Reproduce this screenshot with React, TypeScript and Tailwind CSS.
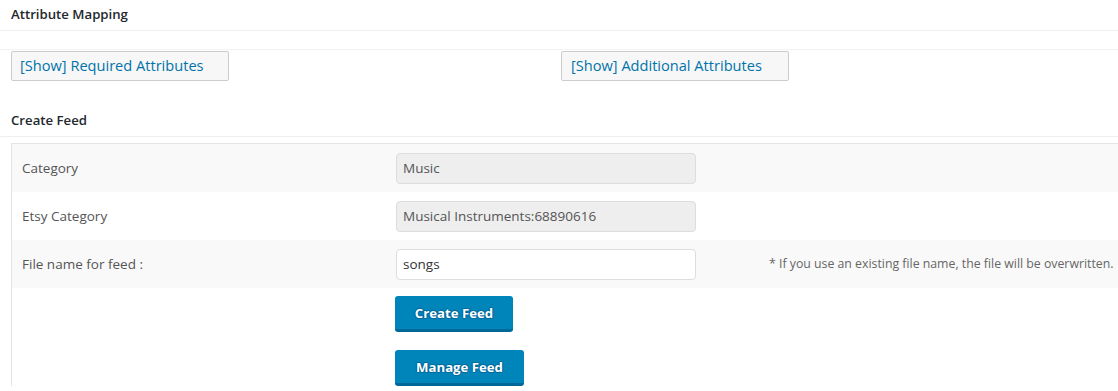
import React from "react";

const rows = [
  { label: "Category", value: "Music", disabled: true },
  { label: "Etsy Category", value: "Musical Instruments:68890616", disabled: true },
  { label: "File name for feed :", value: "songs", disabled: false },
];

const App: React.FC = () => {
  return (
    <div className="w-[1118px] h-[391px] overflow-hidden bg-white text-[13px] text-[#444] font-['Open_Sans',sans-serif]">
      {/* attribute mapping */}
      <div className="h-[31px] flex items-center px-[11px] border-b border-[#eeeeee] font-semibold text-[13.2px] text-[#23282d]">
        Attribute Mapping
      </div>
      <div className="h-[19px] border-b border-[#f3f3f3]"></div>
      <div className="flex pl-[11px] pt-px">
        <button className="w-[218px] h-[30px] text-left pl-[8px] bg-[#f7f7f7] border border-[#cccccc] rounded-[2px] text-[#0073aa] text-[14.6px]">
          [Show] Required Attributes
        </button>
        <button className="ml-[332px] w-[228px] h-[30px] text-left pl-[9px] bg-[#f7f7f7] border border-[#cccccc] rounded-[2px] text-[#0073aa] text-[14.6px]">
          [Show] Additional Attributes
        </button>
      </div>

      {/* create feed */}
      <div className="mt-[25px] h-[31px] flex items-center px-[11px] border-b border-[#eeeeee] font-semibold text-[13.2px] text-[#23282d]">
        Create Feed
      </div>
      <div className="mt-[6px] ml-[11px] border-t border-l border-[#e5e5e5]">
        {rows.map((r, i) => (
          <div
            key={r.label}
            className={
              "h-[48px] flex items-center " +
              (i % 2 === 0 ? "bg-[#f9f9f9]" : "bg-white")
            }
          >
            <div className="w-[384px] pl-[10px] text-[13.5px] text-[#555]">{r.label}</div>
            <div
              className={
                "w-[300px] h-[31px] flex items-center px-[6px] border rounded-[4px] text-[13.5px] " +
                (r.disabled
                  ? "bg-[#eeeeee] border-[#dddddd] text-[#555]"
                  : "bg-white border-[#dddddd] text-[#333]")
              }
            >
              {r.value}
            </div>
            {i === 2 && (
              <div className="ml-[73px] text-[12.3px] text-[#666] whitespace-nowrap">
                * If you use an existing file name, the file will be overwritten.
              </div>
            )}
          </div>
        ))}
        <div className="pl-[383px] pt-[8px] flex flex-col items-start gap-[18px]">
          <button className="w-[118px] h-[36px] pt-[2px] bg-[#0085ba] border-b-[3px] border-[#006799] rounded-[3px] text-white font-bold text-[13.2px] [text-shadow:0_-1px_1px_#006799,1px_0_1px_#006799,0_1px_1px_#006799,-1px_0_1px_#006799]">
            Create Feed
          </button>
          <button className="w-[129px] h-[36px] pt-[2px] bg-[#0085ba] border-b-[3px] border-[#006799] rounded-[3px] text-white font-bold text-[13.2px] [text-shadow:0_-1px_1px_#006799,1px_0_1px_#006799,0_1px_1px_#006799,-1px_0_1px_#006799]">
            Manage Feed
          </button>
        </div>
      </div>
    </div>
  );
};

export default App;
